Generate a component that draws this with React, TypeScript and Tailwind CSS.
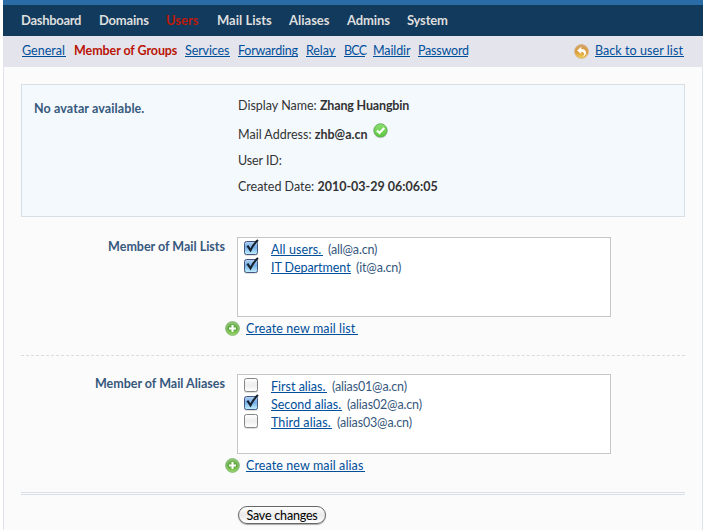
import type { ReactNode } from "react";

function TextLink({ className = "", children }: { className?: string; children: ReactNode }) {
  return (
    <a href="#" className={"block h-[16px] shrink-0 whitespace-nowrap border-b border-[#004f9b] leading-[20px] text-[#004f9b] " + className}>
      {children}
    </a>
  );
}

function AddIcon() {
  return (
    <svg width="15" height="15" viewBox="0 0 15 15" className="shrink-0">
      <defs>
        <linearGradient id="add" x1="0" y1="0" x2="0" y2="1">
          <stop offset="0" stopColor="#7fbd62" />
          <stop offset=".5" stopColor="#5da53d" />
          <stop offset="1" stopColor="#8cd552" />
        </linearGradient>
      </defs>
      <circle cx="7.5" cy="7.5" r="6.9" fill="url(#add)" stroke="#82b472" strokeWidth=".8" />
      <circle cx="7.5" cy="7.5" r="5.7" fill="none" stroke="#a5d58d" strokeWidth=".8" />
      <path d="M7.5 4v7M4 7.5h7" stroke="#fff" strokeWidth="2" />
    </svg>
  );
}

function BackIcon() {
  return (
    <svg width="15" height="15" viewBox="0 0 15 15" className="shrink-0">
      <defs>
        <linearGradient id="back" x1="0" y1="0" x2="0" y2="1">
          <stop offset="0" stopColor="#d3a168" />
          <stop offset=".55" stopColor="#dc9a3c" />
          <stop offset="1" stopColor="#f3d355" />
        </linearGradient>
      </defs>
      <circle cx="7.5" cy="7.5" r="6.9" fill="url(#back)" stroke="#d3b184" strokeWidth=".8" />
      <path d="M3 6.500 7.200 2.800v2.200c3.200 0 5 1.500 4.900 3.800-.1 1.800-1.400 3.200-3.400 3.700 1-1 1.500-1.800 1.400-2.800C9.900 8.500 9 7.900 7.200 7.900v2.200z" fill="#fffdf4" />
    </svg>
  );
}

function OkIcon() {
  return (
    <svg width="15" height="16" viewBox="0 0 15 16" className="shrink-0">
      <defs>
        <linearGradient id="ok" x1="0" y1="0" x2="0" y2="1">
          <stop offset="0" stopColor="#8ddf72" />
          <stop offset="1" stopColor="#5bc93e" />
        </linearGradient>
      </defs>
      <ellipse cx="7.500" cy="8.300" rx="7" ry="7" fill="#8f9f92" opacity=".5" />
      <circle cx="7.500" cy="7.300" r="6.600" fill="url(#ok)" stroke="#55a94a" strokeWidth=".8" />
      <path d="M4 7.500 6.500 10 11.200 5" fill="none" stroke="#fff" strokeWidth="2.200" />
    </svg>
  );
}

function CheckBox({ checked }: { checked: boolean }) {
  return (
    <svg width="17" height="18" viewBox="0 0 17 18" className="shrink-0">
      <defs>
        <linearGradient id="boxOn" x1="0" y1="0" x2="0" y2="1">
          <stop offset="0" stopColor="#b7d4f3" />
          <stop offset=".45" stopColor="#74ade7" />
          <stop offset="1" stopColor="#c4f3ff" />
        </linearGradient>
        <linearGradient id="boxOff" x1="0" y1="0" x2="0" y2="1">
          <stop offset="0" stopColor="#ffffff" />
          <stop offset=".5" stopColor="#eeeeee" />
          <stop offset="1" stopColor="#ffffff" />
        </linearGradient>
      </defs>
      <rect x="1" y="3" width="14" height="14" rx="2.500" fill="#999" opacity=".3" />
      <rect x="1.500" y="2.500" width="13" height="13" rx="2" fill={checked ? "url(#boxOn)" : "url(#boxOff)"} stroke={checked ? "#455780" : "#858585"} />
      {checked && <path d="M4.400 6.700 7.500 11.400C9.500 7 11.500 4 15 1" fill="none" stroke="#17212e" strokeWidth="2.100" />}
    </svg>
  );
}

interface Item { name: string; mail: string; checked: boolean; width: string }

const lists: Item[] = [
  { name: "All users.", mail: "(all@a.cn)", checked: true, width: "w-[52px] tracking-[0.1px]" },
  { name: "IT Department", mail: "(it@a.cn)", checked: true, width: "w-[80px] tracking-[-0.05px]" },
];
const aliases: Item[] = [
  { name: "First alias.", mail: "(alias01@a.cn)", checked: false, width: "w-[56px]" },
  { name: "Second alias.", mail: "(alias02@a.cn)", checked: true, width: "w-[71px]" },
  { name: "Third alias.", mail: "(alias03@a.cn)", checked: false, width: "w-[61px] tracking-[0.1px]" },
];

function MemberSection({ label, items, create, createClass }: { label: string; items: Item[]; create: string; createClass: string }) {
  return (
    <section>
      <div className="flex">
        <div className="w-[204px] shrink-0 text-right font-bold leading-[20px] text-[#36587d]">{label}</div>
        <div className="ml-[12px] h-[80px] w-[374px] border border-[#c6c6c6] bg-white pl-[5px] pt-[1px]">
          {items.map((item) => (
            <div key={item.name} className="flex h-[18px]">
              <CheckBox checked={item.checked} />
              <TextLink className={"ml-[11px] mt-[1px] " + item.width}>{item.name}</TextLink>
              <span className="ml-[5px] mt-[1px] leading-[20px] tracking-[-0.16px] text-[#36587d]">{item.mail}</span>
            </div>
          ))}
        </div>
      </div>
      <div className="mt-[3px] flex h-[18px] pl-[204px]">
        <div className="pt-[1px]"><AddIcon /></div>
        <TextLink className={"-mt-[1px] ml-[6px] " + createClass}>{create}</TextLink>
      </div>
    </section>
  );
}

export default function App() {
  return (
    <div className="h-[530px] w-[706px] overflow-hidden bg-white pl-[3px] font-['Lato','Trebuchet_MS',sans-serif] text-[12.5px]">
      <div className="h-full w-[700px]">
        <div className="h-[5px] bg-[#2a6da6]" />
        <nav className="flex h-[31px] bg-[#123a5c] pl-[18px] pt-[5px] text-[13px] font-bold leading-[20px] text-[#dedede]">
          <span className="w-[78px] shrink-0 tracking-[-0.3px]">Dashboard</span>
          <span className="w-[67px] shrink-0 tracking-[-0.2px]">Domains</span>
          <span className="w-[51px] shrink-0 text-[#bd1a0b]">Users</span>
          <span className="w-[72px] shrink-0">Mail Lists</span>
          <span className="w-[58px] shrink-0">Aliases</span>
          <span className="w-[60px] shrink-0 tracking-[-0.1px]">Admins</span>
          <span className="tracking-[-0.2px]">System</span>
        </nav>
        <div className="flex h-[31px] gap-[8px] bg-[#e4e4ec] pl-[19px] pt-[5px] leading-[20px]">
          <TextLink className="w-[44px]">General</TextLink>
          <span className="w-[103px] shrink-0 whitespace-nowrap font-bold tracking-[-0.08px] text-[#b91506]">Member of Groups</span>
          <TextLink className="w-[45px] tracking-[-0.1px]">Services</TextLink>
          <TextLink className="w-[60px] tracking-[-0.2px]">Forwarding</TextLink>
          <TextLink className="w-[30px] tracking-[-0.1px]">Relay</TextLink>
          <TextLink className="w-[21px] tracking-[-0.8px]">BCC</TextLink>
          <TextLink className="w-[37px] tracking-[-0.1px]">Maildir</TextLink>
          <TextLink className="w-[50px] tracking-[-0.2px]">Password</TextLink>
          <div className="ml-[98px] flex">
            <div className="pt-[3px]"><BackIcon /></div>
            <TextLink className="ml-[6px] w-[89px] tracking-[0.07px]">Back to user list</TextLink>
          </div>
        </div>
        <main className="h-[463px] border-l border-r border-l-[#e1e2e9] border-r-[#dbe4ed] bg-[#fbfbfb] pl-[17px] pt-[17px]">
          <div className="flex h-[133px] w-[664px] border border-[#d7dee4] bg-[#f4f9fe] pl-[12px] leading-[20px]">
            <div className="w-[204px] shrink-0 pt-[14px] font-bold tracking-[0.1px] text-[#36587d]">No avatar available.</div>
            <div className="whitespace-pre pt-[11px] text-[#333]">
              <div className="h-[29px]">Display Name: <b className="tracking-[-0.16px]">Zhang Huangbin</b></div>
              <div className="flex h-[26px]">Mail Address: <b>zhb@a.cn</b><span className="-mt-[2px] ml-[5px]"><OkIcon /></span></div>
              <div className="h-[26px] tracking-[-0.1px]">User ID:</div>
              <div>Created Date: <b>2010-03-29 06:06:05</b></div>
            </div>
          </div>
          <div className="h-[20px]" />
          <MemberSection label="Member of Mail Lists" items={lists} create="Create new mail list" createClass="w-[112px] tracking-[0.1px]" />
          <div className="mt-[17px] w-[664px] border-t border-dashed border-[#dcdcdc]" />
          <div className="h-[18px]" />
          <MemberSection label="Member of Mail Aliases" items={aliases} create="Create new mail alias" createClass="w-[119px] tracking-[0.1px]" />
          <div className="mt-[17px] h-[3px] w-[664px] border-b border-t border-[#d8dfe7]" />
          <button className="ml-[217px] mt-[11px] block h-[18px] w-[88px] whitespace-nowrap rounded-full border border-[#666] bg-linear-to-b from-white via-[#eaeaea] to-white text-center leading-[17px] tracking-[-0.2px] text-black shadow-[0_1px_1px_#aaa]">Save changes</button>
        </main>
      </div>
    </div>
  );
}
